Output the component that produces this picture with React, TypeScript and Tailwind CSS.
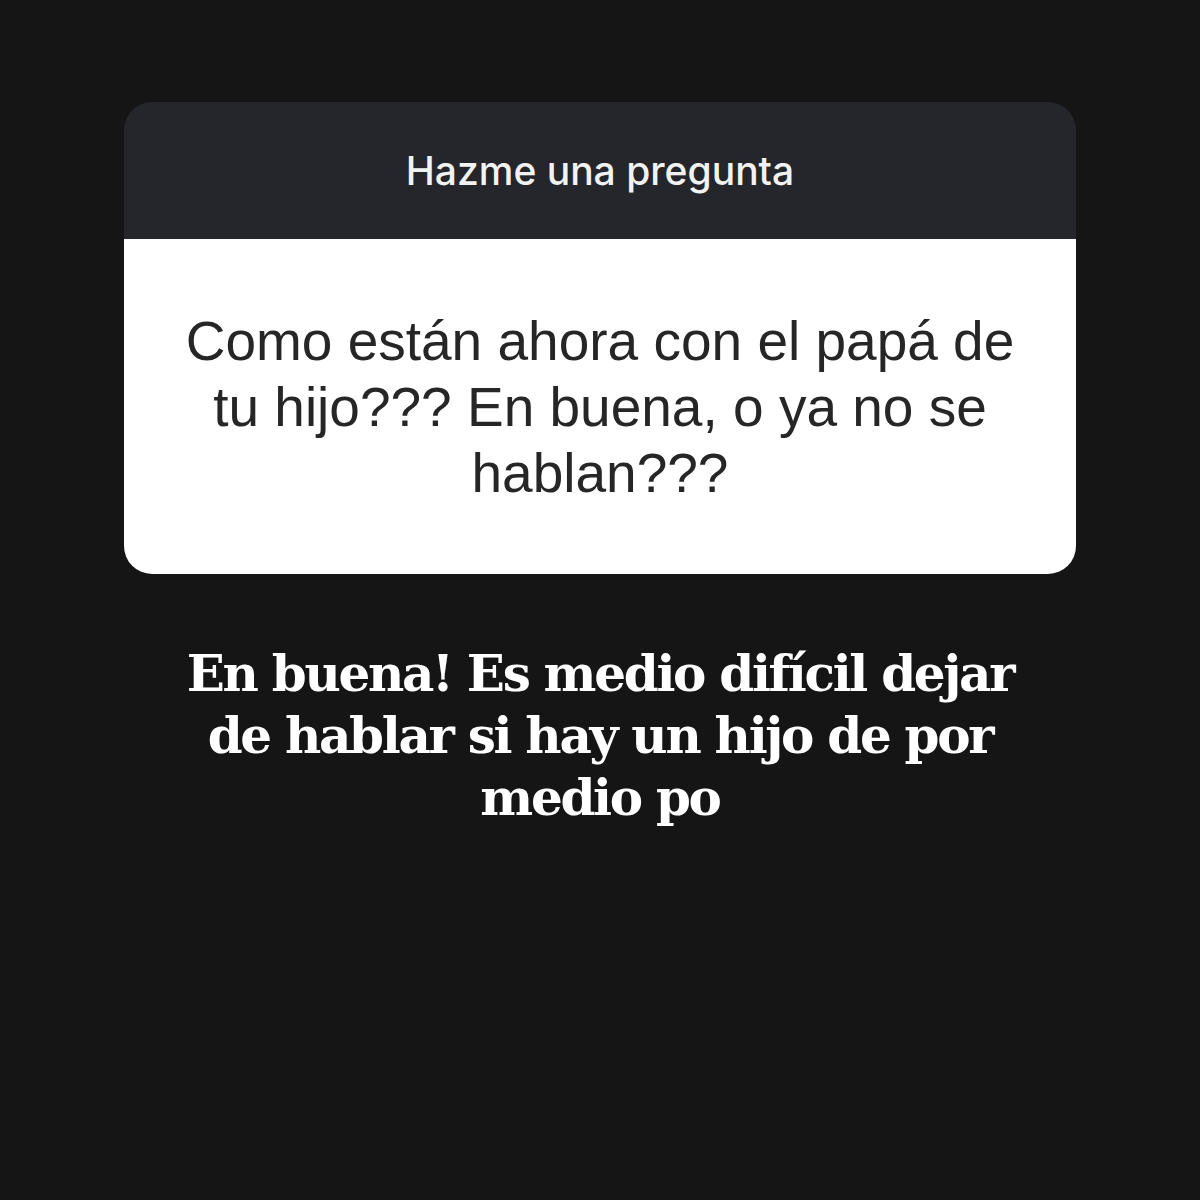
export default function App() {
  return (
    <div className="w-[1200px] h-[1200px] bg-[#151515] flex flex-col items-center pt-[102px]">
      {/* Tarjeta de pregunta */}
      <div className="w-[952px] rounded-[28px] overflow-hidden">
        <div className="h-[137px] bg-[#24262b] flex items-center justify-center">
          <span className="text-[#f2f2f2] text-[39px] font-medium font-['Inter','Liberation_Sans',sans-serif] pt-[2px]">
            Hazme una pregunta
          </span>
        </div>
        <div className="h-[335px] bg-white flex items-center justify-center px-[20px]">
          <p className="text-[#262626] text-[55px] leading-[66px] text-center font-['Liberation_Sans','Inter',sans-serif]">
            Como están ahora con el papá de
            <br />
            tu hijo??? En buena, o ya no se
            <br />
            hablan???
          </p>
        </div>
      </div>

      {/* Respuesta */}
      <p className="mt-[69px] text-white text-[50px] leading-[62px] font-bold text-center font-['DejaVu_Serif','Liberation_Serif',serif] tracking-[-2.3px]">
        En buena! Es medio difícil dejar
        <br />
        de hablar si hay un hijo de por
        <br />
        medio po
      </p>
    </div>
  );
}
